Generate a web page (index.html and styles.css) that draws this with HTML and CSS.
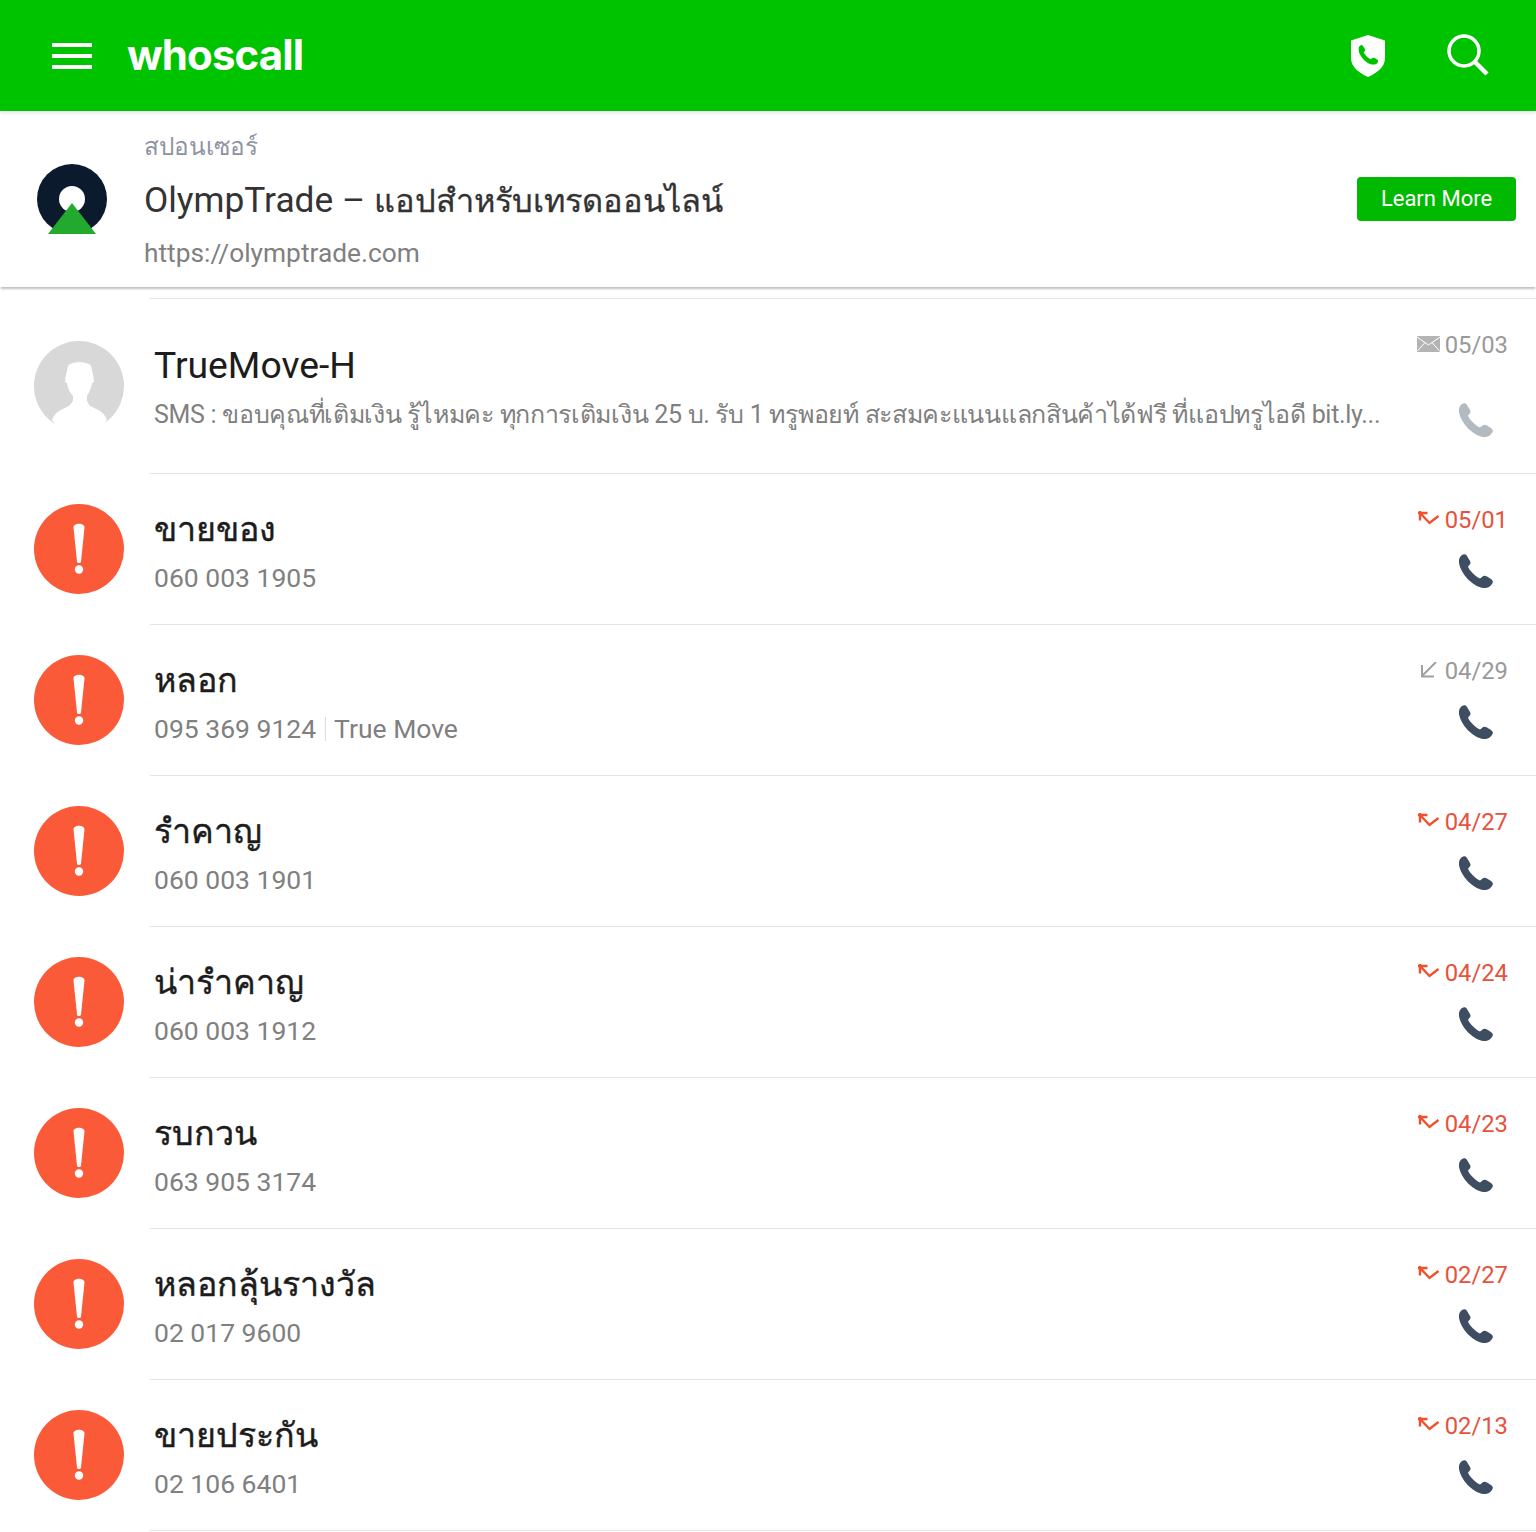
FILE: index.html
```html
<!DOCTYPE html>
<html lang="th">
<head>
    <meta charset="UTF-8">
    <meta name="viewport" content="width=device-width, initial-scale=1.0">
    <title>Whoscall</title>
    <link rel="stylesheet" href="styles.css">
</head>
<body>
    <svg class="defs" width="0" height="0">
        <symbol id="phone" viewBox="0 0 34 34">
            <path d="M3 1C5-.5 7 0 8 2l3 5c1 2 .5 3-1 4.500l-1 1c1 3.500 8 10.500 12 12l2-1.500c1.500-1.500 3-1.500 5-.5l4 2.500c2 1.500 2.500 3 1 5-2 3-5 4.500-9 4C13 32 2 20 0 9-.5 6 .5 3 3 1z"/>
        </symbol>
        <symbol id="alert" viewBox="0 0 90 90">
            <circle cx="45" cy="45" r="45" fill="#fa5a37"/>
            <path d="M39.500 23.500C39.500 18.500 50.500 18.500 50.500 23.500L47 57.500C46.800 59.500 43.200 59.500 43 57.500Z" fill="#fff"/>
            <circle cx="45" cy="65.500" r="4.200" fill="#fff"/>
        </symbol>
        <symbol id="missed" viewBox="0 0 22 16">
            <path d="M2 2L11.500 12 20.500 5M2 0V9.500M0 2H9.500" fill="none" stroke="currentColor" stroke-width="2.400"/>
        </symbol>
    </svg>

    <header class="topbar">
        <div class="menu-icon"><span></span><span></span><span></span></div>
        <div class="brand">whoscall</div>
        <svg class="shield" width="36" height="44" viewBox="0 0 36 44">
            <path d="M18 1L35 6.500V24C35 33 27 39 18 43 9 39 1 33 1 24V6.500Z" fill="#fff"/>
            <g transform="translate(8.500 11) scale(.58)"><use href="#phone" width="34" height="34" fill="#00c300"/></g>
        </svg>
        <svg class="search" width="44" height="44" viewBox="0 0 44 44">
            <circle cx="18" cy="17" r="15" fill="none" stroke="#fff" stroke-width="3.500"/>
            <path d="M29 28L41 40" stroke="#fff" stroke-width="4.500" fill="none"/>
        </svg>
    </header>

    <section class="ad">
        <svg class="ad-logo" width="72" height="72" viewBox="0 0 72 72">
            <circle cx="35" cy="35" r="35" fill="#0c1a2e"/>
            <circle cx="35" cy="35" r="13" fill="#fff"/>
            <path d="M35 39L59 70H11Z" fill="#22aa2e"/>
        </svg>
        <div class="ad-text">
            <div class="ad-label">สปอนเซอร์</div>
            <div class="ad-title">OlympTrade – <span class="ad-title-th">แอปสำหรับเทรดออนไลน์</span></div>
            <div class="ad-url">https://olymptrade.com</div>
        </div>
        <a class="ad-button">Learn More</a>
    </section>

    <div class="list">
        <div class="row row-tall">
            <svg class="avatar" viewBox="0 0 90 90">
                <circle cx="45" cy="45" r="45" fill="#d8d8d8"/>
                <path d="M34 25C37 20 54 20 57 25L59.500 36 60 41 58 42C57 48 55 52 53 55L53 60 56 65C62 68 70 70 73 79L60 95H30L18 79C21 70 29 68 35 65L39 60 39 55C36 52 34 48 33 42L31 41 31.500 36Z" fill="#fff"/>
            </svg>
            <div class="row-body">
                <div class="info">
                    <div class="name">TrueMove-H</div>
                    <div class="sub sms">SMS : ขอบคุณที่เติมเงิน รู้ไหมคะ ทุกการเติมเงิน 25 บ. รับ 1 ทรูพอยท์ สะสมคะแนนแลกสินค้าได้ฟรี ที่แอปทรูไอดี bit.ly...</div>
                </div>
                <div class="side">
                    <div class="date">
                        <svg class="mail" width="23" height="16" viewBox="0 0 23 16">
                            <rect width="23" height="16" fill="#b4b4b4"/>
                            <path d="M0 1L11.500 9 23 1M0 15.500L8 6.500M23 15.500L15 6.500" fill="none" stroke="#fff" stroke-width="1"/>
                        </svg>
                        05/03
                    </div>
                    <svg class="call call-faded"><use href="#phone"/></svg>
                </div>
            </div>
        </div>

        <div class="row">
            <svg class="avatar"><use href="#alert"/></svg>
            <div class="row-body">
                <div class="info">
                    <div class="name name-th">ขายของ</div>
                    <div class="sub">060 003 1905</div>
                </div>
                <div class="side">
                    <div class="date date-missed"><svg class="dir"><use href="#missed"/></svg>05/01</div>
                    <svg class="call"><use href="#phone"/></svg>
                </div>
            </div>
        </div>

        <div class="row">
            <svg class="avatar"><use href="#alert"/></svg>
            <div class="row-body">
                <div class="info">
                    <div class="name name-th">หลอก</div>
                    <div class="sub">095 369 9124<i class="sep"></i>True Move</div>
                </div>
                <div class="side">
                    <div class="date">
                        <svg class="dir" viewBox="0 0 22 16"><path d="M18 0L5 13M4 3V14.500H16" fill="none" stroke="#a0a0a0" stroke-width="2"/></svg>04/29
                    </div>
                    <svg class="call"><use href="#phone"/></svg>
                </div>
            </div>
        </div>

        <div class="row">
            <svg class="avatar"><use href="#alert"/></svg>
            <div class="row-body">
                <div class="info">
                    <div class="name name-th">รำคาญ</div>
                    <div class="sub">060 003 1901</div>
                </div>
                <div class="side">
                    <div class="date date-missed"><svg class="dir"><use href="#missed"/></svg>04/27</div>
                    <svg class="call"><use href="#phone"/></svg>
                </div>
            </div>
        </div>

        <div class="row">
            <svg class="avatar"><use href="#alert"/></svg>
            <div class="row-body">
                <div class="info">
                    <div class="name name-th">น่ารำคาญ</div>
                    <div class="sub">060 003 1912</div>
                </div>
                <div class="side">
                    <div class="date date-missed"><svg class="dir"><use href="#missed"/></svg>04/24</div>
                    <svg class="call"><use href="#phone"/></svg>
                </div>
            </div>
        </div>

        <div class="row">
            <svg class="avatar"><use href="#alert"/></svg>
            <div class="row-body">
                <div class="info">
                    <div class="name name-th">รบกวน</div>
                    <div class="sub">063 905 3174</div>
                </div>
                <div class="side">
                    <div class="date date-missed"><svg class="dir"><use href="#missed"/></svg>04/23</div>
                    <svg class="call"><use href="#phone"/></svg>
                </div>
            </div>
        </div>

        <div class="row">
            <svg class="avatar"><use href="#alert"/></svg>
            <div class="row-body">
                <div class="info">
                    <div class="name name-th">หลอกลุ้นรางวัล</div>
                    <div class="sub">02 017 9600</div>
                </div>
                <div class="side">
                    <div class="date date-missed"><svg class="dir"><use href="#missed"/></svg>02/27</div>
                    <svg class="call"><use href="#phone"/></svg>
                </div>
            </div>
        </div>

        <div class="row">
            <svg class="avatar"><use href="#alert"/></svg>
            <div class="row-body">
                <div class="info">
                    <div class="name name-th">ขายประกัน</div>
                    <div class="sub">02 106 6401</div>
                </div>
                <div class="side">
                    <div class="date date-missed"><svg class="dir"><use href="#missed"/></svg>02/13</div>
                    <svg class="call"><use href="#phone"/></svg>
                </div>
            </div>
        </div>
    </div>
</body>
</html>
```

FILE: styles.css
```css
body {
    margin: 0;
    background: #fff;
    font-family: Roboto, "Noto Sans", "DejaVu Sans", sans-serif;
    color: #222;
    overflow: hidden;
}
.defs {
    position: absolute;
}
.topbar {
    display: flex;
    align-items: center;
    height: 111px;
    background: #00c300;
    padding: 0 46px 0 52px;
    box-sizing: border-box;
    position: relative;
    box-shadow: 0 2px 4px rgba(0,0,0,0.1);
}
.menu-icon {
    display: flex;
    flex-direction: column;
    gap: 7px;
    width: 40px;
}
.menu-icon span {
    height: 4px;
    background: #fff;
}
.brand {
    margin: -3px 0 0 35px;
    font-family: Inter, Roboto, sans-serif;
    font-weight: 700;
    font-size: 42px;
    letter-spacing: -0.9px;
    color: #fff;
    flex: 1;
}
.shield {
    margin-right: 60px;
}
.ad {
    display: flex;
    align-items: center;
    height: 176px;
    padding: 0 20px 0 37px;
    box-sizing: border-box;
    box-shadow: 0 3px 2px -1px rgba(0,0,0,0.25);
}
.ad-logo {
    margin-top: 2px;
}
.ad-text {
    flex: 1;
    align-self: flex-start;
    padding-top: 18px;
    margin-left: 35px;
}
.ad-label {
    font-size: 24.3px;
    color: #8e93a3;
    line-height: 36px;
}
.ad-title {
    margin-top: 5px;
    font-size: 35.3px;
    color: #333;
    line-height: 60px;
}
.ad-title-th {
    font-size: 32.6px;
    -webkit-text-stroke: 0.3px #333;
}
.ad-url {
    font-size: 26.3px;
    color: #808080;
    line-height: 44px;
}
.ad-button {
    width: 159px;
    height: 44px;
    margin-top: -1px;
    line-height: 44px;
    text-align: center;
    background: #00b900;
    border-radius: 4px;
    color: #fff;
    font-size: 22px;
}
.list {
    margin-top: 11px;
}
.list::before {
    content: "";
    display: block;
    margin-left: 150px;
    border-top: 1px solid #e4e4e4;
}
.row {
    display: flex;
    align-items: center;
    padding-left: 34px;
}
.avatar {
    width: 90px;
    height: 90px;
    flex: none;
    margin: -2px 26px 0 0;
}
.row-body {
    flex: 1;
    min-width: 0;
    display: flex;
    height: 150px;
    border-bottom: 1px solid #e4e4e4;
}
.row-tall .row-body {
    height: 174px;
}
.info {
    flex: 1;
    min-width: 0;
    padding: 8px 0 0 4px;
    align-self: center;
}
.name {
    font-size: 37.3px;
    line-height: 48px;
    color: #1c1c1c;
}
.name-th {
    font-size: 34px;
    -webkit-text-stroke: 0.4px #1c1c1c;
}
.sub {
    margin-top: 1px;
    font-size: 26.5px;
    line-height: 48px;
    color: #808080;
    white-space: nowrap;
}
.sms {
    font-size: 25px;
    letter-spacing: -0.3px;
    line-height: 50px;
}
.sep {
    display: inline-block;
    width: 1px;
    height: 24px;
    margin: 0 8px 0 9px;
    background: #ddd;
    vertical-align: -3px;
}
.side {
    flex: none;
    width: 156px;
    padding: 30px 28px 0 0;
    box-sizing: border-box;
    display: flex;
    flex-direction: column;
    align-items: flex-end;
}
.date {
    display: flex;
    align-items: center;
    font-size: 23.8px;
    line-height: 32px;
    color: #999;
}
.date-missed {
    color: #e6523c;
}
.mail {
    margin: -2px 5px 0 0;
}
.dir {
    width: 22px;
    height: 16px;
    margin: -2px 5px 0 0;
    color: #f0502d;
}
.call {
    width: 34px;
    height: 34px;
    margin: 18px 15px 0 0;
    fill: #3f4d63;
}
.call-faded {
    fill: #b4bac2;
    margin-top: 42px;
}
```
